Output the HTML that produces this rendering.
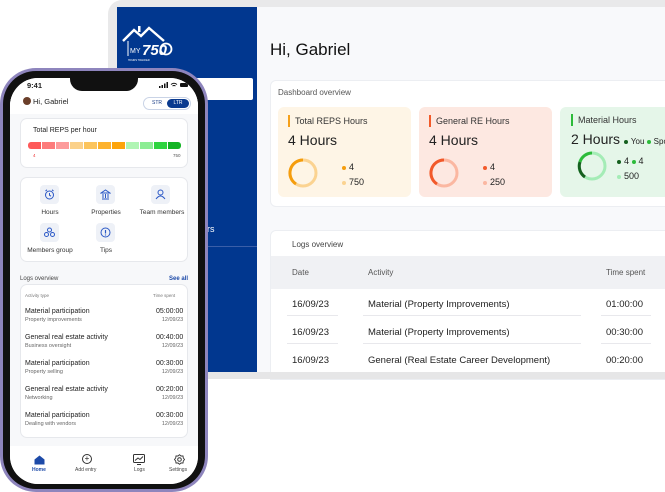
<!DOCTYPE html>
<html><head><meta charset="utf-8"><style>
*{box-sizing:border-box;margin:0;padding:0}
body{width:665px;height:491px;overflow:hidden;background:#fff;font-family:"Liberation Sans",sans-serif;position:relative;color:#222}
.abs{position:absolute}
.lap{left:108px;top:0;width:600px;height:379px;background:#e9e9ea;border-radius:14px}
.side{left:117px;top:7px;width:140px;height:366px;background:#01378f}
.main{left:257px;top:7px;width:420px;height:366px;background:#f8f9fb}
.card{background:#fff;border:1px solid #eceef2;border-radius:6px}
.sc{border-radius:6px}
.bar{width:2px;height:12px}
.t{font-size:9px;color:#333}
.big{font-size:14px;color:#222}
.dot{display:inline-block;width:4px;height:4px;border-radius:50%;margin-right:3px;vertical-align:middle}
.phone{left:0;top:68px;width:208px;height:424px;background:#8e85bd;border-radius:36px}
.pin{left:3px;top:71px;width:202px;height:418px;background:#111;border-radius:33px}
.scr{left:10px;top:78px;width:188px;height:406px;background:#f7f8fa;border-radius:28px;overflow:hidden}
.pc{background:#fff;border:1px solid #e6e8ec;border-radius:7px}
.ic{width:19px;height:19px;background:#eef1f7;border-radius:4px}
.lbl{font-size:6.5px;color:#333;text-align:center}
.r1{font-size:7px;color:#222}.r2{font-size:5.5px;color:#666}
</style></head><body>
<div class="abs lap"></div>
<div class="abs side"></div>
<svg class="abs" style="left:120px;top:24px" width="56" height="38" viewBox="0 0 56 38"><path d="M3 17 L14 6 L21 12 L29 4 L44 17" stroke="#fff" stroke-width="2.4" fill="none"/><rect x="18" y="2" width="2.5" height="6" fill="#fff"/><line x1="8" y1="17" x2="8" y2="32" stroke="#fff" stroke-width="1"/><text x="10" y="29" font-size="7" fill="#fff" font-family="Liberation Sans">MY</text><text x="22" y="31" font-size="15" font-weight="bold" font-style="italic" fill="#fff" font-family="Liberation Sans">750</text><circle cx="46" cy="25" r="5.5" stroke="#fff" stroke-width="1.8" fill="none"/><text x="8" y="37" font-size="2.5" fill="#fff">HOURS TRACKER</text></svg>
<div class="abs" style="left:117px;top:78px;width:136px;height:22px;background:#fff;border-radius:2px"></div>
<div class="abs" style="left:207px;top:224px;color:#fff;font-size:9px">rs</div>
<div class="abs" style="left:200px;top:246px;width:57px;height:1px;background:#3a5ea8"></div>
<div class="abs main"></div>
<div class="abs" style="left:270px;top:40px;font-size:17px;color:#111">Hi, Gabriel</div>
<div class="abs card" style="left:270px;top:80px;width:410px;height:127px"></div>
<div class="abs" style="left:278px;top:88px;font-size:8px;color:#555">Dashboard overview</div>
<div class="abs sc" style="left:278px;top:107px;width:133px;height:90px;background:#fef5e6"></div>
<div class="abs sc" style="left:419px;top:107px;width:133px;height:90px;background:#fde8e1"></div>
<div class="abs sc" style="left:560px;top:107px;width:120px;height:90px;background:#e5f6e9"></div>
<div class="abs bar" style="left:288px;top:115px;background:#f5a01a"></div>
<div class="abs t" style="left:295px;top:116px">Total REPS Hours</div>
<div class="abs big" style="left:288px;top:132px">4 Hours</div>
<div class="abs bar" style="left:429px;top:115px;background:#f25a2a"></div>
<div class="abs t" style="left:436px;top:116px">General RE Hours</div>
<div class="abs big" style="left:429px;top:132px">4 Hours</div>
<div class="abs bar" style="left:571px;top:114px;background:#2cbb3a"></div>
<div class="abs t" style="left:578px;top:115px">Material Hours</div>
<div class="abs big" style="left:571px;top:131px;white-space:nowrap">2 Hours <span style="font-size:8px"><span class="dot" style="background:#14601e"></span>You <span class="dot" style="background:#2cbb3a"></span>Spo</span></div>
<svg class="abs" style="left:287px;top:157px" width="32" height="32"><circle cx="16" cy="16" r="13" stroke="#fbd391" stroke-width="3" fill="none"/><path d="M16 3 A13 13 0 0 0 9 27" stroke="#f59d0d" stroke-width="3" fill="none"/></svg>
<div class="abs" style="left:342px;top:160px;font-size:9px;line-height:15px"><span class="dot" style="background:#f59d0d"></span>4<br><span class="dot" style="background:#fbd391"></span>750</div>
<svg class="abs" style="left:428px;top:157px" width="32" height="32"><circle cx="16" cy="16" r="13" stroke="#fbb7a1" stroke-width="3" fill="none"/><path d="M16 3 A13 13 0 0 0 9 27" stroke="#f2592a" stroke-width="3" fill="none"/></svg>
<div class="abs" style="left:483px;top:160px;font-size:9px;line-height:15px"><span class="dot" style="background:#f2592a"></span>4<br><span class="dot" style="background:#fbb7a1"></span>250</div>
<svg class="abs" style="left:576px;top:150px" width="32" height="32"><circle cx="16" cy="16" r="13" stroke="#a4ecb6" stroke-width="3" fill="none"/><path d="M16 3 A13 13 0 0 0 4 12" stroke="#2cbb3a" stroke-width="3" fill="none"/><path d="M4 12 A13 13 0 0 0 9 27" stroke="#14601e" stroke-width="3" fill="none"/></svg>
<div class="abs" style="left:617px;top:154px;font-size:9px;line-height:15px"><span class="dot" style="background:#14601e"></span>4 <span class="dot" style="background:#2cbb3a"></span>4<br><span class="dot" style="background:#a4ecb6"></span>500</div>
<div class="abs card" style="left:270px;top:230px;width:410px;height:150px;border-radius:6px 6px 0 0"></div>
<div class="abs" style="left:292px;top:240px;font-size:8px;color:#444">Logs overview</div>
<div class="abs" style="left:271px;top:256px;width:400px;height:33px;background:#f0f1f4"></div>
<div class="abs" style="left:292px;top:268px;font-size:8px;color:#555">Date</div>
<div class="abs" style="left:368px;top:268px;font-size:8px;color:#555">Activity</div>
<div class="abs" style="left:606px;top:268px;font-size:8px;color:#555">Time spent</div>
<div class="abs" style="left:292px;top:291px;font-size:9.5px;line-height:28px;color:#222">16/09/23<br>16/09/23<br>16/09/23</div>
<div class="abs" style="left:368px;top:291px;font-size:9.5px;line-height:28px;color:#222">Material (Property Improvements)<br>Material (Property Improvements)<br>General (Real Estate Career Development)</div>
<div class="abs" style="left:606px;top:291px;font-size:9.5px;line-height:28px;color:#222">01:00:00<br>00:30:00<br>00:20:00</div>
<div class="abs" style="left:287px;top:315px;width:51px;height:1px;background:#e8e8ec"></div>
<div class="abs" style="left:363px;top:315px;width:218px;height:1px;background:#e8e8ec"></div>
<div class="abs" style="left:601px;top:315px;width:50px;height:1px;background:#e8e8ec"></div>
<div class="abs" style="left:287px;top:343px;width:51px;height:1px;background:#e8e8ec"></div>
<div class="abs" style="left:363px;top:343px;width:218px;height:1px;background:#e8e8ec"></div>
<div class="abs" style="left:601px;top:343px;width:50px;height:1px;background:#e8e8ec"></div>
<div class="abs" style="left:108px;top:372px;width:560px;height:7px;background:#e6e6e7"></div>

<div class="abs phone"></div>
<div class="abs pin"></div>
<div class="abs scr">
 <div class="abs" style="left:0;top:0;width:188px;height:30px;background:#fff"></div>
 <div class="abs" style="left:60px;top:-2px;width:68px;height:15px;background:#111;border-radius:0 0 12px 12px"></div>
 <div class="abs" style="left:17px;top:3px;font-size:7.5px;font-weight:bold">9:41</div>
 <svg class="abs" style="left:149px;top:3px" width="30" height="8"><rect x="0" y="5" width="1.5" height="2" fill="#111"/><rect x="2.5" y="4" width="1.5" height="3" fill="#111"/><rect x="5" y="2.5" width="1.5" height="4.5" fill="#111"/><rect x="7.5" y="1" width="1.5" height="6" fill="#111"/><path d="M12 3.5 Q15 1 18 3.5 M13.5 5 Q15 4 16.5 5" stroke="#111" stroke-width="1" fill="none"/><rect x="21" y="2" width="8" height="4" rx="1" fill="#111"/></svg>
 <div class="abs" style="left:0;top:14px;width:188px;height:22px;background:#fff"></div>
 <div class="abs" style="left:13px;top:19px;width:8px;height:8px;border-radius:50%;background:#6b3f2a"></div>
 <div class="abs" style="left:23px;top:19px;font-size:7.5px">Hi, Gabriel</div>
 <div class="abs" style="left:133px;top:19px;width:48px;height:13px;border:1px solid #c9d3e6;border-radius:7px;background:#fff"></div>
 <div class="abs" style="left:142px;top:22px;font-size:5px;color:#1d3f87">STR</div>
 <div class="abs" style="left:157px;top:21px;width:22px;height:9px;background:#0a3a8f;border-radius:5px;color:#fff;font-size:5px;text-align:center;line-height:9px">LTR</div>
 <div class="abs pc" style="left:10px;top:40px;width:168px;height:50px"></div>
 <div class="abs" style="left:23px;top:49px;font-size:7px">Total REPS per hour</div>
 <div class="abs" style="left:18px;top:64px;width:153px;height:7px;display:flex;gap:1px">
  <div style="flex:1;background:#fe5a5a;border-radius:3px 0 0 3px"></div><div style="flex:1;background:#fd7b7b"></div><div style="flex:1;background:#fd9b9b"></div><div style="flex:1;background:#fbd18a"></div><div style="flex:1;background:#fcc45c"></div><div style="flex:1;background:#fdb22e"></div><div style="flex:1;background:#fda40a"></div><div style="flex:1;background:#b0f5b4"></div><div style="flex:1;background:#8ced94"></div><div style="flex:1;background:#2ed43f"></div><div style="flex:1;background:#13b424;border-radius:0 3px 3px 0"></div></div>
 <div class="abs" style="left:23px;top:75px;font-size:4.5px;color:#e33">4</div>
 <div class="abs" style="left:163px;top:75px;font-size:4.5px;color:#555">750</div>
 <div class="abs pc" style="left:10px;top:99px;width:168px;height:85px"></div>
 <div class="abs ic" style="left:30px;top:107px"></div>
 <svg class="abs" style="left:34px;top:111px" width="11" height="11"><circle cx="5.5" cy="6" r="4" stroke="#2b58c6" stroke-width="1" fill="none"/><path d="M5.5 4v2.2l1.5 1M1.5 2l1.5-1.2M9.5 2L8 0.8" stroke="#2b58c6" stroke-width="1" fill="none"/></svg>
 <div class="abs ic" style="left:86px;top:107px"></div>
 <svg class="abs" style="left:90px;top:111px" width="11" height="11"><path d="M1 4 L5.5 1 L10 4 Z M2 10h7M3 5v4M5.5 5v4M8 5v4" stroke="#2b58c6" stroke-width="1" fill="none"/></svg>
 <div class="abs ic" style="left:141px;top:107px"></div>
 <svg class="abs" style="left:145px;top:111px" width="11" height="11"><circle cx="5.5" cy="3.5" r="2.5" stroke="#2b58c6" stroke-width="1" fill="none"/><path d="M1 10 Q5.5 4 10 10" stroke="#2b58c6" stroke-width="1" fill="none"/></svg>
 <div class="abs ic" style="left:30px;top:145px"></div>
 <svg class="abs" style="left:34px;top:149px" width="11" height="11"><circle cx="5.5" cy="3" r="2" stroke="#2b58c6" stroke-width="1" fill="none"/><circle cx="2.5" cy="7.5" r="2" stroke="#2b58c6" stroke-width="1" fill="none"/><circle cx="8.5" cy="7.5" r="2" stroke="#2b58c6" stroke-width="1" fill="none"/></svg>
 <div class="abs ic" style="left:86px;top:145px"></div>
 <svg class="abs" style="left:90px;top:149px" width="11" height="11"><circle cx="5.5" cy="5.5" r="4.5" stroke="#2b58c6" stroke-width="1" fill="none"/><path d="M5.5 3v3.5M5.5 7.5v1" stroke="#2b58c6" stroke-width="1.2"/></svg>
 <div class="abs lbl" style="left:20px;top:131px;width:40px">Hours</div>
 <div class="abs lbl" style="left:75px;top:131px;width:42px">Properties</div>
 <div class="abs lbl" style="left:127px;top:131px;width:50px">Team members</div>
 <div class="abs lbl" style="left:10px;top:169px;width:60px">Members group</div>
 <div class="abs lbl" style="left:75px;top:169px;width:42px">Tips</div>
 <div class="abs" style="left:10px;top:198px;font-size:6px;color:#444">Logs overview</div>
 <div class="abs" style="left:159px;top:198px;font-size:6px;color:#1d4aa8;font-weight:bold">See all</div>
 <div class="abs pc" style="left:10px;top:206px;width:168px;height:154px"></div>
 <div class="abs" style="left:15px;top:215px;font-size:4.5px;color:#777">Activity type</div>
 <div class="abs" style="left:143px;top:215px;font-size:4.5px;color:#777">Time spent</div>
 <div class="abs" style="left:15px;top:230px;line-height:8px"><div class="r1">Material participation</div><div class="r2">Property improvements</div></div>
 <div class="abs" style="left:146px;top:230px;line-height:8px;text-align:right"><div class="r1">05:00:00</div><div class="r2">12/09/23</div></div>
 <div class="abs" style="left:15px;top:256px;line-height:8px"><div class="r1">General real estate activity</div><div class="r2">Business oversight</div></div>
 <div class="abs" style="left:146px;top:256px;line-height:8px;text-align:right"><div class="r1">00:40:00</div><div class="r2">12/09/23</div></div>
 <div class="abs" style="left:15px;top:282px;line-height:8px"><div class="r1">Material participation</div><div class="r2">Property selling</div></div>
 <div class="abs" style="left:146px;top:282px;line-height:8px;text-align:right"><div class="r1">00:30:00</div><div class="r2">12/09/23</div></div>
 <div class="abs" style="left:15px;top:308px;line-height:8px"><div class="r1">General real estate activity</div><div class="r2">Networking</div></div>
 <div class="abs" style="left:146px;top:308px;line-height:8px;text-align:right"><div class="r1">00:20:00</div><div class="r2">12/09/23</div></div>
 <div class="abs" style="left:15px;top:334px;line-height:8px"><div class="r1">Material participation</div><div class="r2">Dealing with vendors</div></div>
 <div class="abs" style="left:146px;top:334px;line-height:8px;text-align:right"><div class="r1">00:30:00</div><div class="r2">12/09/23</div></div>
 <div class="abs" style="left:0;top:368px;width:188px;height:40px;background:#fff"></div>
 <svg class="abs" style="left:24px;top:377px" width="11" height="10"><path d="M0.5 4.5 L5.5 0.5 L10.5 4.5 V9.5 H0.5 Z" fill="#1d4aa8"/></svg>
 <div class="abs" style="left:22px;top:389px;font-size:5px;color:#1d4aa8;font-weight:bold">Home</div>
 <div class="abs" style="left:72px;top:376px;width:10px;height:10px;border:1px solid #333;border-radius:50%;font-size:8px;line-height:8px;text-align:center">+</div>
 <div class="abs" style="left:65px;top:389px;font-size:5px;color:#444">Add entry</div>
 <svg class="abs" style="left:123px;top:376px" width="12" height="11"><rect x="0.5" y="0.5" width="11" height="8" rx="1" stroke="#333" fill="none"/><path d="M2 6.5 L5 4 L7 5.5 L10 2.5 M4 10.5h4" stroke="#333" fill="none"/></svg>
 <div class="abs" style="left:124px;top:389px;font-size:5px;color:#444">Logs</div>
 <svg class="abs" style="left:164px;top:376px" width="11" height="11"><circle cx="5.5" cy="5.5" r="1.8" stroke="#333" fill="none"/><path d="M5.5 0.7 L7 2 L9 2 L9.3 4 L10.5 5.5 L9.3 7 L9 9 L7 9 L5.5 10.3 L4 9 L2 9 L1.7 7 L0.5 5.5 L1.7 4 L2 2 L4 2 Z" stroke="#333" stroke-width="0.9" fill="none"/></svg>
 <div class="abs" style="left:159px;top:389px;font-size:5px;color:#444">Settings</div>
</div>
</body></html>
